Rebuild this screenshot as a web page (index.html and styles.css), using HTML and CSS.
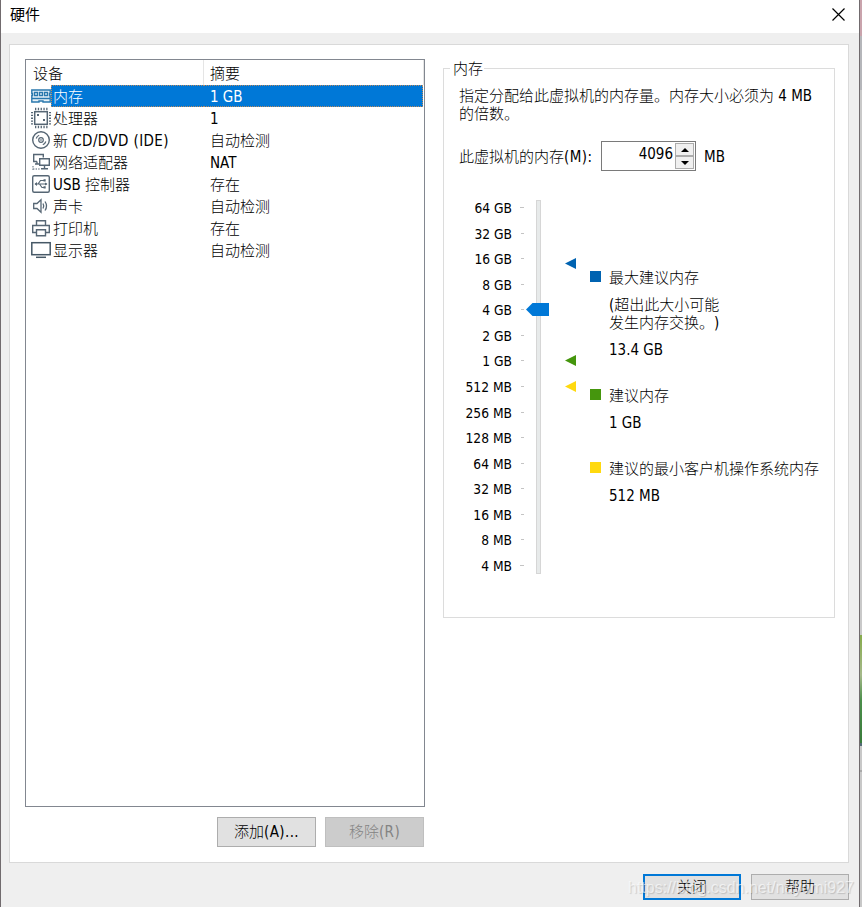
FILE: index.html
```html
<!DOCTYPE html>
<html lang="zh-CN">
  <head>
    <meta charset="UTF-8" />
    <meta name="viewport" content="width=device-width, initial-scale=1.0" />
    <title>硬件</title>
    <link rel="stylesheet" href="styles.css">
  </head>
  <body>
    <div class="window">
      <div class="titlebar">
        <span>硬件</span>
        <svg class="close" width="13" height="13" viewBox="0 0 13 13">
          <path d="M.5 .5l12 12M12.5 .5l-12 12" stroke="#000" stroke-width="1.2" />
        </svg>
      </div>

      <div class="panel">
        <div class="left">
          <div class="devices">
            <div class="row head"><span class="name">设备</span><span class="summary">摘要</span></div>
            <div class="row selected">
              <svg width="20" height="22" viewBox="0 0 20 22" fill="none" stroke="#2a78ad">
                <path d="M.8 5h18.400v3.500h-.7v2h.7v6.500H12v-1H8v1H.8v-6.500h.7v-2H.8z" fill="#e8f2f8" stroke-width="1.4" />
                <path d="M3.500 7.500h3v3h-3zM8.500 7.500h3v3h-3zM13.500 7.500h3v3h-3zM1 13.500h18" stroke-width="1.300" />
              </svg>
              <span class="name">内存</span><span class="summary">1 GB</span>
            </div>
            <div class="row">
              <svg width="20" height="22" viewBox="0 0 20 22" fill="none" stroke="#566674">
                <rect x="3.700" y="4.700" width="12.600" height="12.600" stroke-width="1.500" />
                <path d="M4 2h13M4 20h13" stroke-width="2.400" stroke-dasharray="1.300 1.500" />
                <path d="M1 5v13M19 5v13" stroke-width="2" stroke-dasharray="1.300 1.500" />
                <path d="M6 8h2M12 13h2" stroke-width="2" />
              </svg>
              <span class="name">处理器</span><span class="summary">1</span>
            </div>
            <div class="row">
              <svg width="20" height="22" viewBox="0 0 20 22" fill="none" stroke="#566674">
                <circle cx="10" cy="11" r="8.300" stroke-width="1.400" />
                <circle cx="10" cy="11" r="2.300" stroke-width="1.200" />
                <circle cx="10" cy="11" r=".4" />
                <path d="M5.200 9.500a5 5 0 0 1 3-3.200M14.800 12.500a5 5 0 0 1-3 3.200" stroke-width="1.200" />
              </svg>
              <span class="name">新 <b>CD/DVD (IDE)</b></span><span class="summary">自动检测</span>
            </div>
            <div class="row">
              <svg width="20" height="22" viewBox="0 0 20 22" fill="none" stroke="#566674" stroke-width="1.400">
                <path d="M6 10.500H2.700v-7h9.600v3M4 13h4M6 10.500V13" />
                <path d="M8.700 7.700h9.600v6.600H8.700zM13.500 14.500v3M10 17.700h7" />
                <path d="M2 18h7M2 15v4" stroke="#8995a0" stroke-dasharray="1.400 1.200" />
              </svg>
              <span class="name">网络适配器</span><span class="summary">NAT</span>
            </div>
            <div class="row">
              <svg width="20" height="22" viewBox="0 0 20 22" fill="none" stroke="#566674">
                <rect x="1.700" y="2.700" width="16.600" height="16.600" rx="1.500" stroke-width="1.400" />
                <path d="M4 11h12M7 11l2.500-3.500H13M8.500 11l2.500 3.500h2.500" stroke-width="1.200" />
                <path d="M3.500 11l2.500-2v4zM12.500 6.300h2.200v2.200h-2.200zM12.500 13.300h2.200v2.200h-2.200z" fill="#566674" stroke="none" />
                <path d="M14 9.500v3l2.500-1.500z" fill="#566674" stroke="none" />
              </svg>
              <span class="name">USB 控制器</span><span class="summary">存在</span>
            </div>
            <div class="row">
              <svg width="20" height="22" viewBox="0 0 20 22" fill="none" stroke="#566674" stroke-width="1.300">
                <path d="M2.700 8.500H6l4-3.700v12.400l-4-3.700H2.700z" />
                <path d="M12 8.500q1.500 2.500 0 5M14 6.500q3 4.500 0 9" />
              </svg>
              <span class="name">声卡</span><span class="summary">自动检测</span>
            </div>
            <div class="row">
              <svg width="20" height="22" viewBox="0 0 20 22" fill="none" stroke="#566674" stroke-width="1.400">
                <path d="M5.500 8.500V3.700h9v4.800M5 15.500H1.700v-7h16.600v7H15" />
                <path d="M5.500 12.700h9v6h-9z" />
              </svg>
              <span class="name">打印机</span><span class="summary">存在</span>
            </div>
            <div class="row">
              <svg width="20" height="22" viewBox="0 0 20 22" fill="none" stroke="#465866">
                <rect x=".8" y="3.700" width="18.400" height="12" stroke-width="1.500" />
                <path d="M5 18.300h10" stroke-width="1.500" />
              </svg>
              <span class="name">显示器</span><span class="summary">自动检测</span>
            </div>
          </div>
          <div class="list-buttons">
            <button class="btn">添加<b>(A)...</b></button>
            <button class="btn" disabled>移除<b>(R)</b></button>
          </div>
        </div>

        <div class="group">
          <div class="legend">内存</div>
          <p class="intro">指定分配给此虚拟机的内存量。内存大小必须为 4 MB<br>的倍数。</p>
          <div class="amount">
            <label>此虚拟机的内存<b>(M):</b></label>
            <div class="spin">
              <div class="value">4096</div>
              <div class="arrows"><i class="up"></i><i class="down"></i></div>
            </div>
            <span>MB</span>
          </div>

          <div class="memory">
            <div class="scale">
              <div>64 GB</div>
              <div>32 GB</div>
              <div>16 GB</div>
              <div>8 GB</div>
              <div>4 GB</div>
              <div>2 GB</div>
              <div>1 GB</div>
              <div>512 MB</div>
              <div>256 MB</div>
              <div>128 MB</div>
              <div>64 MB</div>
              <div>32 MB</div>
              <div>16 MB</div>
              <div>8 MB</div>
              <div>4 MB</div>
            </div>
            <div class="track">
              <svg class="thumb" width="23" height="13" viewBox="0 0 23 13"><path d="M0 6.500L6.500 0H23v13H6.500z" fill="#0078d7" /></svg>
              <svg class="mark max" width="11" height="11" viewBox="0 0 11 11"><path d="M0 5.500L11 0v11z" /></svg>
              <svg class="mark rec" width="11" height="11" viewBox="0 0 11 11"><path d="M0 5.500L11 0v11z" /></svg>
              <svg class="mark min" width="11" height="11" viewBox="0 0 11 11"><path d="M0 5.500L11 0v11z" /></svg>
            </div>
            <div class="hints">
              <div class="hint max">
                <p>最大建议内存</p>
                <p>(超出此大小可能<br>发生内存交换。)</p>
                <p>13.4 GB</p>
              </div>
              <div class="hint rec">
                <p>建议内存</p>
                <p>1 GB</p>
              </div>
              <div class="hint min">
                <p>建议的最小客户机操作系统内存</p>
                <p>512 MB</p>
              </div>
            </div>
          </div>
        </div>
      </div>

      <div class="footer">
        <button class="btn default">关闭</button>
        <button class="btn">帮助</button>
      </div>
    </div>
    <div class="watermark">https://blog.csdn.net/nayomi927</div>
  </body>
</html>
```

FILE: styles.css
```css
* {
  box-sizing: border-box;
}
body {
  margin: 0;
  width: 862px;
  height: 907px;
  overflow: hidden;
  position: relative;
  font: 300 15px/18px "DejaVu Sans Condensed", "Noto Sans CJK SC", sans-serif;
  text-spacing-trim: space-all;
  color: #000;
  /* strip of desktop showing to the right of the window */
  background: linear-gradient(#c9a3ac 0 36px, #b5b6ba 36px 90px, #c9c9c9 90px 635px, #86ab4c 635px, #a5b98a 675px, #4c8f4b 700px, #397b3b 743px, #536a75 743px 746px, #c8c8c8 746px 770px, #aaa 770px 772px, #c8c8c8 772px);
}
b {
  font-weight: inherit;
  letter-spacing: 0.4px;
}
p {
  margin: 0;
}
.window {
  width: 860px;
  height: 907px;
  background: #efefef;
  border: solid #716b6e;
  border-width: 0 1px;
}
.titlebar {
  height: 33px;
  padding: 0 14px 4px 9px;
  font-weight: 400;
  background: #fff;
  display: flex;
  align-items: center;
  justify-content: space-between;
}
.panel {
  width: 840px;
  height: 819px;
  margin: 11px 0 0 8px;
  padding: 14px 13px 0 15px;
  background: #fff;
  border: 1px solid #d9d9d9;
  display: flex;
  justify-content: space-between;
}
.left {
  width: 400px;
}
.devices {
  height: 748px;
  border: 1px solid #828790;
}
.row {
  height: 22px;
  padding-left: 5px;
  display: flex;
  line-height: 24px;
  white-space: nowrap;
}
.row svg {
  flex: none;
}
.name {
  width: 153px;
  padding-left: 2px;
}
.summary {
  width: 219px;
  padding-left: 6px;
}
.head {
  height: 25px;
  padding-left: 0;
  line-height: 28px;
}
.head .name {
  width: 178px;
  padding-left: 7px;
  border-right: 1px solid #e5e5e5;
}
.head .summary {
  width: 220px;
  border-right: 1px solid #e5e5e5;
}
.selected span {
  background: #0078d7;
  color: #fff;
  border: dotted #b98a60;
  border-width: 1px 0;
  line-height: 22px;
}
.selected .name {
  padding-left: 1px;
  border-left-width: 1px;
}
.selected .summary {
  border-right-width: 1px;
}
.list-buttons {
  display: flex;
  justify-content: flex-end;
  gap: 9px;
  margin: 10px 1px 0 0;
}
.btn {
  width: 98px;
  height: 30px;
  padding: 0;
  font: inherit;
  color: #000;
  background: #e1e1e1;
  border: 1px solid #adadad;
}
.list-buttons .btn {
  width: 99px;
}
.btn:disabled {
  color: #838383;
  background: #ccc;
  border-color: #bfbfbf;
}
.group {
  width: 392px;
  height: 550px;
  margin-top: 9px;
  padding: 0 15px;
  border: 1px solid #dcdcdc;
}
.legend {
  width: 34px;
  height: 18px;
  margin: -9px 0 0 -9px;
  padding-left: 3px;
  background: #fff;
}
.intro {
  margin-top: 9px;
  white-space: nowrap;
}
.amount {
  height: 30px;
  margin-top: 18px;
  display: flex;
  align-items: center;
}
.amount label {
  width: 142px;
  padding-top: 2px;
}
.amount > span {
  padding-top: 2px;
}
.spin {
  width: 95px;
  height: 30px;
  margin-right: 8px;
  padding: 1px;
  border: 1px solid #7a7a7a;
  display: flex;
}
.value {
  flex: 1;
  padding-right: 2px;
  line-height: 23px;
  text-align: right;
}
.arrows {
  width: 19px;
}
.arrows i {
  height: 13px;
  background: #f0f0f0;
  border: 1px solid #acacac;
  display: flex;
  align-items: center;
  justify-content: center;
}
.arrows i::before {
  content: "";
  border: 4px solid transparent;
  border-top-width: 0;
  border-bottom: 4px solid #000;
}
.arrows .down::before {
  transform: scaleY(-1);
}
.memory {
  display: flex;
  margin-top: 24px;
}
.scale {
  width: 66px;
  font-size: 13.700px;
}
.scale div {
  height: 25.570px;
  width: 53px;
  line-height: 27px;
  text-align: right;
  white-space: nowrap;
  position: relative;
}
.scale div::after {
  content: "";
  position: absolute;
  left: 62px;
  top: 12px;
  width: 3px;
  height: 1px;
  background: #c4c4c4;
}
.scale div:first-child::after,
.scale div:last-child::after {
  left: 61px;
  width: 4px;
}
.track {
  width: 5px;
  height: 374px;
  margin: 5px 0 0 11px;
  background: #e7eaea;
  border: 1px solid #d6d6d6;
  position: relative;
}
.thumb {
  position: absolute;
  left: -11px;
  top: 102px;
}
.mark {
  position: absolute;
  left: 28px;
}
.mark.max {
  top: 57px;
  fill: #0063b1;
}
.mark.rec {
  top: 154px;
  fill: #45960d;
}
.mark.min {
  top: 180px;
  fill: #ffd90f;
}
.hints {
  margin: 74px 0 0 68px;
  white-space: nowrap;
}
.hint {
  position: relative;
  display: grid;
  gap: 9px;
  margin-bottom: 28px;
}
.hint::before {
  content: "";
  position: absolute;
  left: -19px;
  top: 2px;
  width: 11px;
  height: 11px;
}
.hint.max::before {
  background: #0063b1;
}
.hint.rec::before {
  background: #45960d;
}
.hint.min::before {
  background: #ffd90f;
}
.footer {
  display: flex;
  justify-content: flex-end;
  gap: 10px;
  margin: 11px 10px 0 0;
}
.footer .btn {
  height: 26px;
}
.footer .default {
  border: 2px solid #0078d7;
}
.watermark {
  position: absolute;
  left: 628px;
  top: 879px;
  font: 16px/18px "Liberation Sans", sans-serif;
  color: rgba(255, 255, 255, 0.6);
  text-shadow: 1px 1px 1px rgba(0, 0, 0, 0.15);
}
```
